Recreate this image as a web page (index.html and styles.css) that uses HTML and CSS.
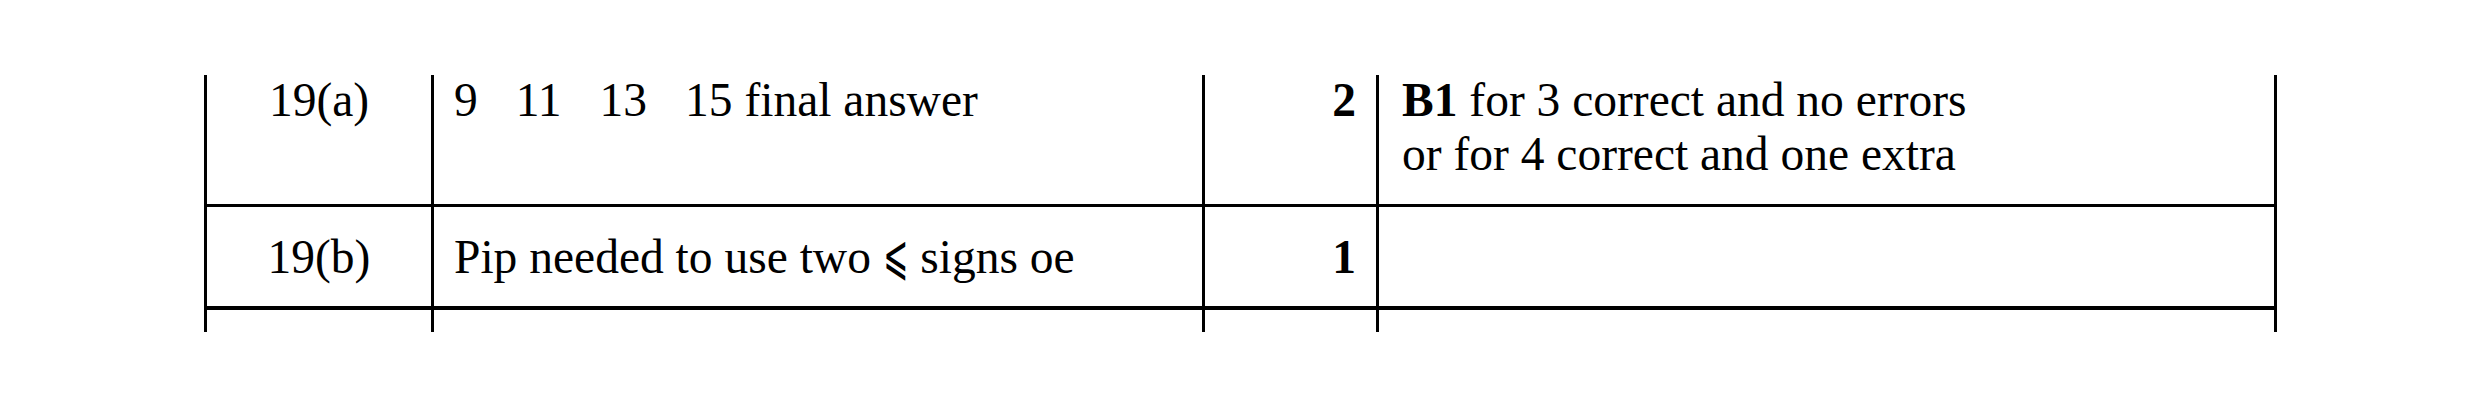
FILE: index.html
```html
<!DOCTYPE html>
<html lang="en">
<head>
<meta charset="utf-8">
<title>Mark scheme</title>
<link rel="stylesheet" href="styles.css">
</head>
<body>
<div class="page">
  <table class="ms">
    <tr class="r1">
      <td class="q"><div class="cell">19(a)</div></td>
      <td class="ans"><div class="cell"><span class="n">9</span><span class="n">11</span><span class="n">13</span>15 final answer</div></td>
      <td class="mk"><div class="cell">2</div></td>
      <td class="com"><div class="cell"><b>B1</b> for 3 correct and no errors<br>or for 4 correct and one extra</div></td>
    </tr>
    <tr class="r2">
      <td class="q">19(b)</td>
      <td class="ans">Pip needed to use two <span class="sym">⩽</span> signs oe</td>
      <td class="mk">1</td>
      <td class="com"></td>
    </tr>
    <tr class="r3">
      <td class="q"></td>
      <td class="ans"></td>
      <td class="mk"></td>
      <td class="com"></td>
    </tr>
  </table>
</div>
</body>
</html>
```

FILE: styles.css
```css
html, body {
  margin: 0;
  padding: 0;
  background: #ffffff;
}

.page {
  padding: 75px 0 0 204px;
}

.ms {
  border-collapse: separate;
  border-spacing: 0;
  table-layout: fixed;
  width: 2073px;
  font-family: "Liberation Serif", "Times New Roman", serif;
  font-size: 47.5px;
  line-height: 54px;
  color: #000;
}

.ms td {
  box-sizing: border-box;
  border-left: 3px solid #000;
  padding: 0;
  vertical-align: top;
  white-space: nowrap;
}

.ms td.q { width: 227px; text-align: center; }
.ms td.ans { width: 771px; padding-left: 20px; }
.ms td.mk { width: 174px; text-align: right; padding-right: 20px; font-weight: bold; }
.ms td.com { width: 901px; padding-left: 23px; border-right: 3px solid #000; }

.r1 td { height: 129px; }
.r1 .cell { margin-top: -2px; }

.r2 td {
  height: 102px;
  border-top: 3px solid #000;
  padding-top: 23px;
}

.r3 td {
  height: 26px;
  border-top: 4px solid #000;
}

.n { margin-right: 0.8em; }

.sym {
  display: inline-block;
  font-family: "DejaVu Serif", "DejaVu Sans", serif;
  font-size: 0.9em;
  line-height: 1;
  transform: scale(0.7, 1.3);
  transform-origin: 50% 80%;
  margin: 0 -0.12em;
}
```
